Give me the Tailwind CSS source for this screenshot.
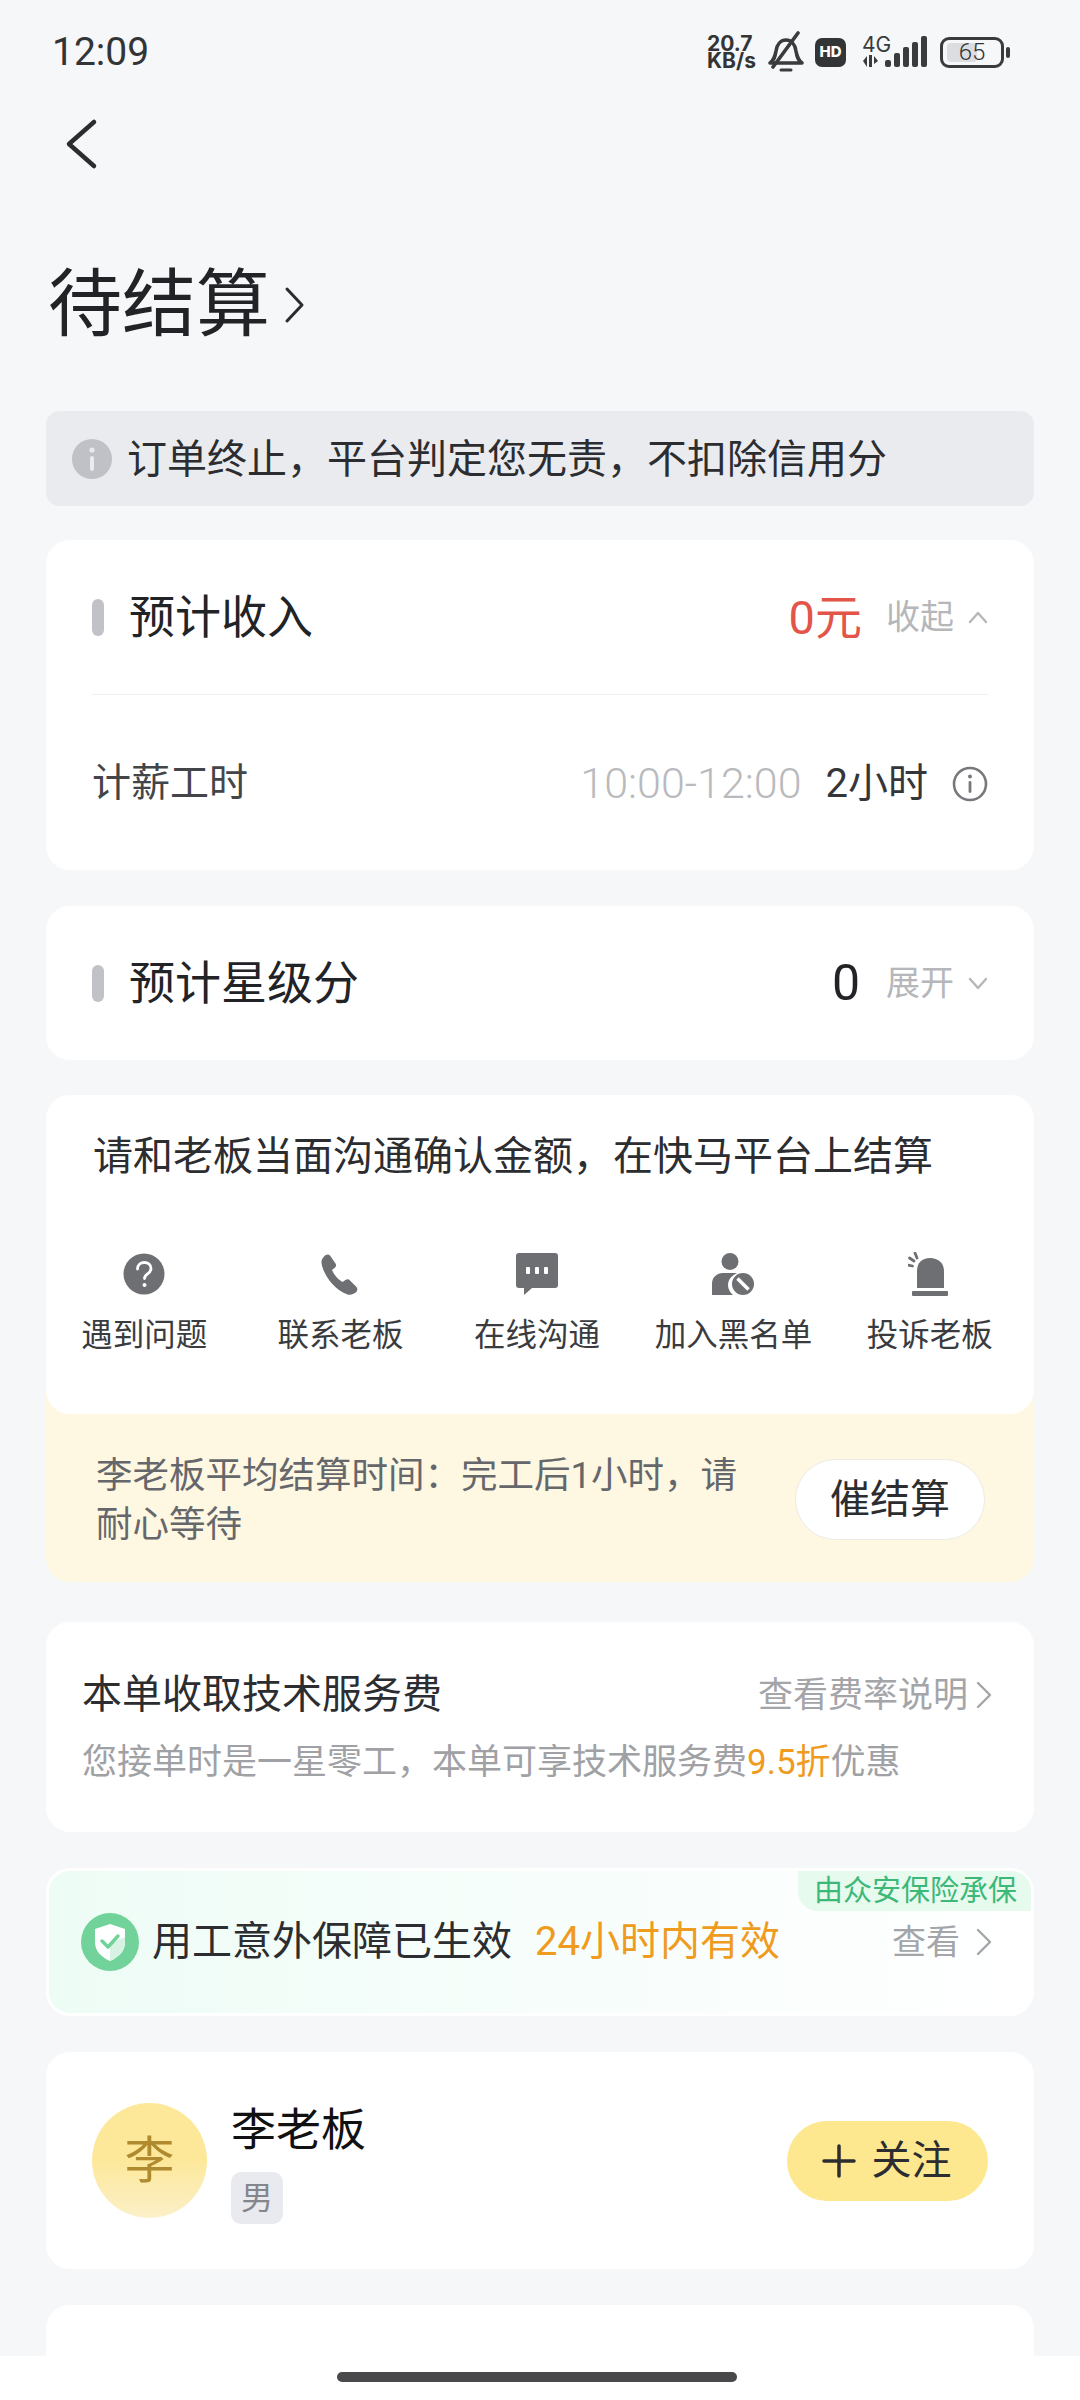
<!DOCTYPE html>
<html lang="zh-CN">
<head>
  <meta charset="UTF-8" />
  <meta name="viewport" content="width=device-width, initial-scale=1.0"/>
  <title>待结算</title>
  <script src="https://cdn.jsdelivr.net/npm/@tailwindcss/browser@4"></script>
</head>
<body class="font-['Roboto','Noto_Sans_CJK_SC',sans-serif] bg-[#f6f7f9] text-[#222326]">
<div class="relative w-[1080px] h-[2400px] overflow-hidden">

  <!-- status bar -->
  <div class="h-[104px] pl-[52px] pr-[76px] flex items-center justify-between text-[#333436]">
    <span class="font-['Roboto',sans-serif] text-[39px] leading-none">12:09</span>
    <div class="flex items-center">
      <div class="font-['Inter',sans-serif] font-bold text-[21px] leading-[17px] w-[51px]">20.7<br>KB/s</div>
      <svg class="ml-[9px]" width="38" height="42" viewBox="0 0 38 42" fill="none" stroke="#3a3b3d" stroke-width="3.6" stroke-linecap="round" stroke-linejoin="round"><path d="M3 32c4-3 5-6 6-12 1-7 5-11 10-11s9 4 10 11c1 6 2 9 6 12z"/><path d="M6 36 31 2"/><path d="M14 39h10" stroke-width="3"/></svg>
      <div class="ml-[10px] w-[31px] h-[29px] rounded-[7px] bg-[#333436] text-white font-['Inter',sans-serif] font-extrabold text-[15px] flex items-center justify-center">HD</div>
      <svg class="ml-[14px] overflow-visible" width="72" height="34" viewBox="-6 0 72 34" fill="#3a3b3d"><text x="-4" y="17" font-family="Inter,sans-serif" font-size="21" fill="#3a3b3d">4G</text><path d="M-3 26 1 21v11zM3 20h3v12H3zM8 21l4 5-4 3z"/><rect x="19" y="25" width="6" height="7" rx="2"/><rect x="28" y="18" width="6" height="14" rx="2"/><rect x="37" y="12" width="6" height="20" rx="2"/><rect x="46" y="7" width="6" height="25" rx="2"/><rect x="55" y="1" width="6" height="31" rx="2"/></svg>
      <div class="ml-[8px] relative w-[64px] h-[31px] rounded-[9px] border-[3px] border-[#3a3b3d] flex items-center justify-center">
        <div class="absolute left-[4px] top-[3px] bottom-[3px] w-[30px] rounded-[4px] bg-[#dcdde0]"></div>
        <span class="relative font-['Roboto',sans-serif] font-light text-[24px] leading-none">65</span>
        <div class="absolute -right-[9px] top-[7px] w-[4px] h-[11px] rounded-full bg-[#3a3b3d]"></div>
      </div>
    </div>
  </div>

  <!-- back -->
  <div class="h-[80px] pl-[62px] flex items-center">
    <svg width="40" height="52" viewBox="0 0 40 52" fill="none" stroke="#2b2c2e" stroke-width="4.5" stroke-linecap="round" stroke-linejoin="round"><path d="M32 4 7 26l25 22"/></svg>
  </div>

  <!-- title -->
  <div class="mt-[68px] pl-[48px] h-[100px] flex items-center">
    <span class="text-[74px] leading-none pt-[6px]">待结算</span>
    <svg class="ml-[13px] mt-[6px]" width="24" height="40" viewBox="0 0 24 40" fill="none" stroke="#2b2c2e" stroke-width="3" stroke-linecap="round" stroke-linejoin="round"><path d="M4 4 19 20 4 36"/></svg>
  </div>

  <div class="px-[46px] mt-[59px]">
    <!-- notice -->
    <div class="h-[95px] rounded-[14px] bg-[#e9ebef] pl-[26px] flex items-center">
      <svg width="40" height="40" viewBox="0 0 40 40"><circle cx="20" cy="20" r="20" fill="#bfc1c6"/><circle cx="20" cy="11" r="2.6" fill="#e9ebef"/><rect x="18" y="17" width="4" height="15" rx="2" fill="#e9ebef"/></svg>
      <span class="ml-[15px] pt-[2px] text-[40px] leading-none text-[#2c2d30]">订单终止&#65292;平台判定您无责&#65292;不扣除信用分</span>
    </div>

    <!-- income -->
    <div class="mt-[34px] h-[330px] rounded-[24px] bg-white px-[46px]">
      <div class="h-[155px] border-b border-[#eeeff1] flex items-center">
        <div class="w-[12px] h-[37px] rounded-full bg-[#c1c2c7]"></div>
        <span class="ml-[25px] text-[46px] leading-none flex-1">预计收入</span>
        <span class="text-[47px] leading-none text-[#e25548]">0元</span>
        <span class="ml-[24px] text-[34px] leading-none text-[#b6b7bb]">收起</span>
        <svg class="ml-[14px]" width="20" height="14" viewBox="0 0 20 14" fill="none" stroke="#b6b7bb" stroke-width="2.4" stroke-linecap="round" stroke-linejoin="round"><path d="M2 12 10 3l8 9"/></svg>
      </div>
      <div class="h-[175px] pt-[2px] flex items-center">
        <span class="text-[39px] leading-none text-[#444548] flex-1">计薪工时</span>
        <span class="font-light text-[43px] leading-none text-[#b9babd]">10:00-12:00</span>
        <span class="ml-[24px] text-[40px] leading-none text-[#35363a]">2小时</span>
        <svg class="ml-[24px]" width="36" height="36" viewBox="0 0 36 36" fill="none"><circle cx="18" cy="18" r="16" stroke="#77787c" stroke-width="2.6"/><circle cx="18" cy="10.5" r="2" fill="#77787c"/><rect x="16.6" y="15" width="2.8" height="12" rx="1.4" fill="#77787c"/></svg>
      </div>
    </div>

    <!-- star score -->
    <div class="mt-[36px] h-[154px] rounded-[24px] bg-white px-[46px] flex items-center">
      <div class="w-[12px] h-[37px] rounded-full bg-[#c1c2c7]"></div>
      <span class="ml-[25px] text-[46px] leading-none flex-1">预计星级分</span>
      <span class="text-[50px] leading-none">0</span>
      <span class="ml-[26px] text-[34px] leading-none text-[#b6b7bb]">展开</span>
      <svg class="ml-[14px]" width="20" height="14" viewBox="0 0 20 14" fill="none" stroke="#b6b7bb" stroke-width="2.4" stroke-linecap="round" stroke-linejoin="round"><path d="M2 3l8 9 8-9"/></svg>
    </div>

    <!-- settle -->
    <div class="mt-[35px] rounded-[24px] bg-[#fef8e3]">
      <div class="h-[319px] rounded-[24px] bg-white">
        <div class="pl-[47px] pt-[40px] text-[40px] leading-[44px] text-[#2c2d30]">请和老板当面沟通确认金额&#65292;在快马平台上结算</div>
        <div class="mt-[73px] grid grid-cols-5 pr-[6px]">
          <div class="flex flex-col items-center">
            <svg width="44" height="44" viewBox="0 0 44 44"><circle cx="22" cy="22" r="20.5" fill="#6e6f73"/><path d="M15.500 17c0-4 3-6.500 6.800-6.500s6.700 2.400 6.700 6c0 5.500-6.500 5.300-6.500 10" fill="none" stroke="#fff" stroke-width="2.800" stroke-linecap="round"/><circle cx="22.500" cy="33" r="2" fill="#fff"/></svg>
            <span class="mt-[24px] text-[31.500px] leading-none text-[#3a3b3e]">遇到问题</span>
          </div>
          <div class="flex flex-col items-center">
            <svg width="44" height="44" viewBox="0 0 44 44"><path d="M5 4.500c1.500-2 4.500-3 6-1l5.500 8c1 1.500.5 3.500-1 4.500l-2.500 2c1.500 4 6.500 10 10.500 12l3-2c1.500-1 3.500-.8 4.500.5l6.500 6.500c1.500 1.800 1 4-.8 5.500-2 1.500-5 3-8.200 2C15 38 4 22 2.500 11c-.3-2.500 1-5 2.500-6.500z" fill="#6e6f73"/></svg>
            <span class="mt-[24px] text-[31.500px] leading-none text-[#3a3b3e]">联系老板</span>
          </div>
          <div class="flex flex-col items-center">
            <svg width="44" height="44" viewBox="0 0 44 44"><path d="M4 1h36a3 3 0 0 1 3 3v29a3 3 0 0 1-3 3H17l-8 7v-7H4a3 3 0 0 1-3-3V4a3 3 0 0 1 3-3z" fill="#6e6f73"/><rect x="11" y="15" width="4" height="7" rx="1" fill="#fff"/><rect x="20" y="15" width="4" height="7" rx="1" fill="#fff"/><rect x="29" y="15" width="4" height="7" rx="1" fill="#fff"/></svg>
            <span class="mt-[24px] text-[31.500px] leading-none text-[#3a3b3e]">在线沟通</span>
          </div>
          <div class="flex flex-col items-center">
            <svg width="44" height="44" viewBox="0 0 44 44"><circle cx="19" cy="9.500" r="8.500" fill="#6e6f73"/><path d="M1 43V32c0-7 5-11 11-11h14c-6 3-9 7-9 12 0 4 2 7.500 5 10z" fill="#6e6f73"/><circle cx="32" cy="32" r="11" fill="#6e6f73"/><path d="m26.500 26.500 11 11" stroke="#fff" stroke-width="3.500"/></svg>
            <span class="mt-[24px] text-[31.500px] leading-none text-[#3a3b3e]">加入黑名单</span>
          </div>
          <div class="flex flex-col items-center">
            <svg width="44" height="44" viewBox="0 0 44 44"><path d="M9 36V19C9 11 14 6 22 6s14 5 14 13v17z" fill="#6e6f73"/><rect x="4" y="39" width="36" height="5" rx="1" fill="#6e6f73"/><path d="m7 1 2 5M1.500 6 6 9M0 13l4.500 1" stroke="#6e6f73" stroke-width="2.800" stroke-linecap="round"/></svg>
            <span class="mt-[24px] text-[31.500px] leading-none text-[#3a3b3e]">投诉老板</span>
          </div>
        </div>
      </div>
      <div class="h-[168px] pl-[50px] pr-[49px] pt-[3px] flex items-center justify-between">
        <div class="w-[665px] text-[36.500px] leading-[49px] text-[#66676b]">李老板平均结算时间&#65306;完工后1小时&#65292;请耐心等待</div>
        <div class="w-[190px] h-[81px] rounded-full bg-white border border-[#ecebe3] flex items-center justify-center text-[40px] leading-none text-[#2c2d30]">催结算</div>
      </div>
    </div>

    <!-- service fee -->
    <div class="mt-[40px] h-[210px] rounded-[24px] bg-white pl-[36px] pr-[42px] pt-[50px]">
      <div class="flex items-center justify-between h-[46px]">
        <span class="text-[40px] leading-none text-[#2c2d30]">本单收取技术服务费</span>
        <div class="flex items-center">
          <span class="text-[35px] leading-none text-[#a4a5a9]">查看费率说明</span>
          <svg class="ml-[8px]" width="16" height="28" viewBox="0 0 16 28" fill="none" stroke="#a4a5a9" stroke-width="2.400" stroke-linecap="round" stroke-linejoin="round"><path d="m2 2 12 12L2 26"/></svg>
        </div>
      </div>
      <div class="mt-[23px] text-[35px] leading-[44px] text-[#a0a1a5]">您接单时是一星零工&#65292;本单可享技术服务费<span class="text-[#ef9b1e]">9.5折</span>优惠</div>
    </div>

    <!-- insurance -->
    <div class="relative mt-[36px] h-[148px] rounded-[24px] border-[3px] border-white bg-gradient-to-r from-[#eefcf6] to-white pl-[32px] pr-[39px] flex items-center">
      <div class="absolute right-0 top-0 h-[40px] pl-[16px] pr-[14px] rounded-bl-[20px] rounded-tr-[20px] bg-[#e6faee] text-[29px] leading-[40px] text-[#3cb878]">由众安保险承保</div>
      <svg width="58" height="58" viewBox="0 0 58 58"><circle cx="29" cy="29" r="29" fill="#72d39a"/><path d="M29 11 44 16v13c0 9-6 15-15 19-9-4-15-10-15-19V16z" fill="#fff"/><path d="M29 30 44 24v5c0 9-6 15-15 19z" fill="#d8f3e3"/><path d="m21 28 6 6 10-11" fill="none" stroke="#72d39a" stroke-width="3.500" stroke-linecap="round" stroke-linejoin="round"/></svg>
      <span class="ml-[13px] text-[40px] leading-none text-[#2c2d30]">用工意外保障已生效</span>
      <span class="ml-[23px] flex-1 text-[40px] leading-none text-[#ef9b1e]">24小时内有效</span>
      <span class="text-[34px] leading-none text-[#a4a5a9]">查看</span>
      <svg class="ml-[16px]" width="16" height="28" viewBox="0 0 16 28" fill="none" stroke="#a4a5a9" stroke-width="2.400" stroke-linecap="round" stroke-linejoin="round"><path d="m2 2 12 12L2 26"/></svg>
    </div>

    <!-- boss -->
    <div class="mt-[36px] h-[217px] rounded-[24px] bg-white pl-[46px] pr-[46px] flex items-center">
      <div class="w-[115px] h-[115px] rounded-full bg-gradient-to-b from-[#fde89a] from-50% to-[#fbf0c8] flex items-center justify-center text-[50px] leading-none text-[#b08a2e]">李</div>
      <div class="ml-[24px] flex-1 flex flex-col items-start pt-[10px]">
        <span class="text-[45px] leading-none text-[#111]">李老板</span>
        <span class="mt-[19px] w-[52px] h-[52px] rounded-[10px] bg-[#e9eaef] flex items-center justify-center text-[32px] leading-none text-[#85868c]">男</span>
      </div>
      <div class="w-[201px] h-[80px] rounded-full bg-[#fde78f] flex items-center justify-center">
        <svg class="-ml-[2px]" width="34" height="34" viewBox="0 0 34 34" stroke="#2c2d30" stroke-width="3.500" stroke-linecap="round"><path d="M17 2v30M2 17h30"/></svg>
        <span class="ml-[16px] text-[40px] leading-none text-[#2c2d30]">关注</span>
      </div>
    </div>

    <!-- next card, cut off by the bottom bar -->
    <div class="mt-[36px] h-[200px] rounded-[24px] bg-white"></div>
  </div>

  <!-- bottom gesture bar -->
  <div class="absolute left-0 right-0 bottom-0 h-[44px] bg-white">
    <div class="absolute left-[337px] top-[16px] w-[400px] h-[10px] rounded-full bg-[#49494b]"></div>
  </div>
</div>
</body>
</html>
